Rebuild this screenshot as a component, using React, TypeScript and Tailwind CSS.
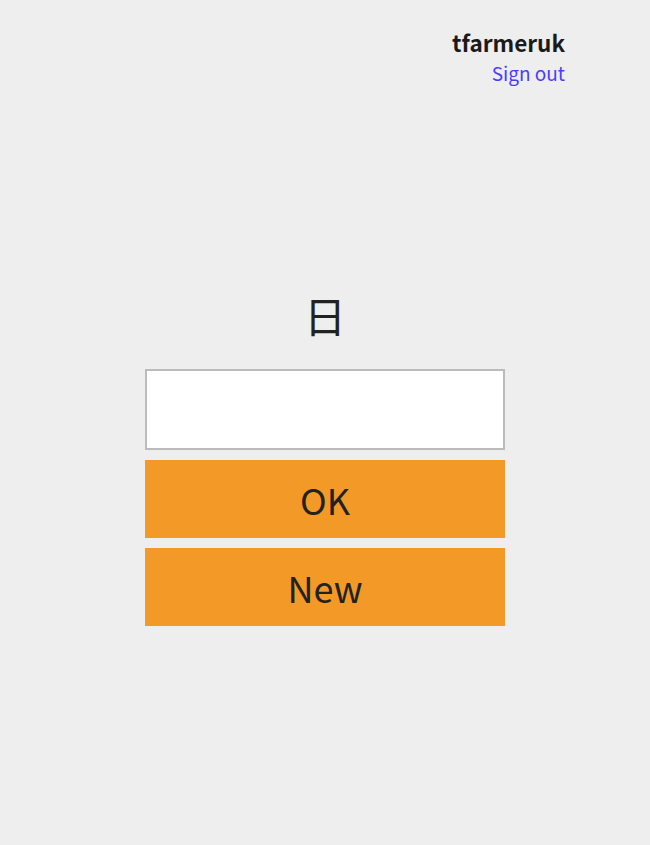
import React from "react";

export default function App() {
  return (
    <div
      className="min-h-[845px] w-full bg-[#eeeeee] text-[#222222]"
      style={{ fontFamily: '"Noto Sans CJK JP", "Noto Sans", sans-serif' }}
    >
      <header className="flex flex-col items-end pr-[85px] pt-[25px]">
        <div className="text-[22.5px] font-semibold leading-[34px] text-[#1a1a1a]">tfarmeruk</div>
        <a className="mt-[1px] text-[19px] leading-[26px] text-[#4a3cff]" href="#">
          Sign out
        </a>
      </header>
      <main className="mt-[205px] flex flex-col items-center">
        <div className="text-[42px] leading-[48px] text-[#222222]">日</div>
        <div className="mt-[30px] flex w-[360px] flex-col gap-[10px]">
          <input className="h-[81px] w-full border-2 border-[#bbbbbb] bg-white px-2 text-[24px] outline-none" />
          <button className="h-[78px] w-full bg-[#f39927] text-[36px] text-[#222222]">OK</button>
          <button className="h-[78px] w-full bg-[#f39927] text-[36px] text-[#222222]">New</button>
        </div>
      </main>
    </div>
  );
}
